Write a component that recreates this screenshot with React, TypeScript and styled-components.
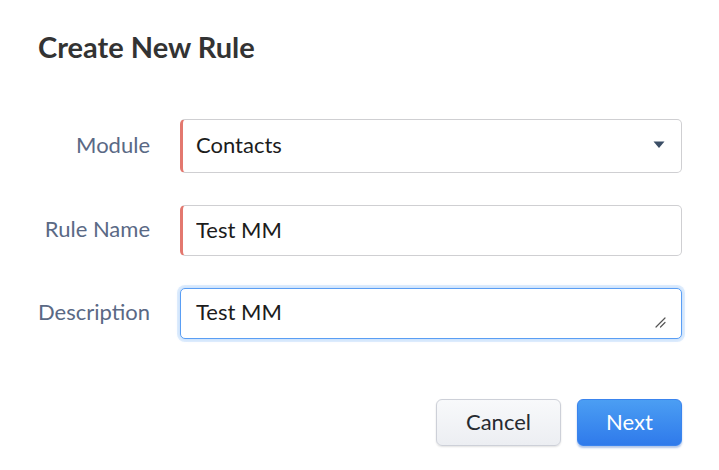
import React, { useState } from "react";
import styled, { createGlobalStyle } from "styled-components";

const GlobalStyle = createGlobalStyle`
  html, body {
    margin: 0;
    padding: 0;
    background: #ffffff;
  }
  body {
    font-family: Lato, "Liberation Sans", sans-serif;
  }
`;

const App: React.FC = () => {
  const [form, setForm] = useState({
    module: "Contacts",
    ruleName: "Test MM",
    description: "Test MM",
  });

  const handleChange = (
    e: React.ChangeEvent<HTMLInputElement | HTMLTextAreaElement | HTMLSelectElement>,
  ) => {
    setForm({ ...form, [e.target.name]: e.target.value });
  };

  return (
    <Page>
      <GlobalStyle />
      <Title>Create New Rule</Title>
      <Form>
        <Row>
          <Label htmlFor="module">Module</Label>
          <SelectWrap>
            <Select
              id="module"
              name="module"
              value={form.module}
              onChange={handleChange}
              $required
            >
              <option>Contacts</option>
              <option>Leads</option>
              <option>Deals</option>
            </Select>
            <Caret viewBox="0 0 12 8" aria-hidden>
              <path d="M0.5 0.5 H11.5 L6 7 Z" fill="#3b4e66" />
            </Caret>
          </SelectWrap>
        </Row>
        <Row>
          <Label htmlFor="ruleName">Rule Name</Label>
          <Input
            id="ruleName"
            name="ruleName"
            value={form.ruleName}
            onChange={handleChange}
            $required
          />
        </Row>
        <Row>
          <Label htmlFor="description">Description</Label>
          <AreaWrap>
            <TextArea
              id="description"
              name="description"
              value={form.description}
              onChange={handleChange}
              rows={1}
            />
            <Grip viewBox="0 0 12 12" aria-hidden>
              <path
                d="M2 11 L11 2 M6.5 11 L11 6.5"
                stroke="#555"
                strokeWidth="1.2"
                strokeLinecap="round"
              />
            </Grip>
          </AreaWrap>
        </Row>
      </Form>
      <Actions>
        <Button type="button">Cancel</Button>
        <Button type="button" $primary>
          Next
        </Button>
      </Actions>
    </Page>
  );
};

const Page = styled.div`
  width: 719px;
  height: 470px;
  box-sizing: border-box;
  padding: 30px 37px 0 38px;
`;

const Title = styled.h1`
  margin: 0;
  font-size: 29px;
  line-height: 34px;
  font-weight: 700;
  color: #333333;
`;

const Form = styled.div`
  display: flex;
  flex-direction: column;
  gap: 32px;
  margin-top: 55px;
`;

const Row = styled.div`
  display: grid;
  grid-template-columns: 112px 1fr;
  column-gap: 30px;
  align-items: center;
`;

const Label = styled.label`
  text-align: right;
  white-space: nowrap;
  font-size: 22px;
  line-height: 26px;
  margin-top: -3px;
  color: #5a6985;
`;

const fieldBase = `
  width: 100%;
  box-sizing: border-box;
  font-family: Lato, "Liberation Sans", sans-serif;
  font-size: 22px;
  color: #1c1c1c;
  background: #ffffff;
  border: 1px solid #cfcfd2;
  border-radius: 5px;
  outline: none;
`;

const SelectWrap = styled.div`
  position: relative;
`;

const Select = styled.select<{ $required?: boolean }>`
  ${fieldBase}
  height: 54px;
  padding: 0 40px 3px 13px;
  appearance: none;
  border-left: ${(p) => (p.$required ? "3px solid #e3786f" : "1px solid #cfcfd2")};
`;

const Caret = styled.svg`
  position: absolute;
  right: 17px;
  top: 22px;
  width: 12px;
  height: 8px;
  pointer-events: none;
`;

const Input = styled.input<{ $required?: boolean }>`
  ${fieldBase}
  height: 51px;
  padding: 0 13px 3px;
  border-left: ${(p) => (p.$required ? "3px solid #e3786f" : "1px solid #cfcfd2")};
`;

const AreaWrap = styled.div`
  position: relative;
  height: 51px;
`;

const TextArea = styled.textarea`
  ${fieldBase}
  display: block;
  height: 51px;
  padding: 9px 15px;
  line-height: 28px;
  resize: none;
  overflow: hidden;
  border-color: #5a9ef4;
  box-shadow: 0 0 0 3px rgba(90, 158, 244, 0.18), 0 0 4px rgba(90, 158, 244, 0.3);
`;

const Grip = styled.svg`
  position: absolute;
  right: 16px;
  bottom: 11px;
  width: 12px;
  height: 12px;
  pointer-events: none;
`;

const Actions = styled.div`
  display: flex;
  justify-content: flex-end;
  gap: 16px;
  margin-top: 60px;
`;

const Button = styled.button<{ $primary?: boolean }>`
  height: 47px;
  box-sizing: border-box;
  padding: 0 0 2px;
  width: ${(p) => (p.$primary ? "105px" : "125px")};
  font-family: Lato, "Liberation Sans", sans-serif;
  font-size: 22px;
  border-radius: 6px;
  cursor: pointer;
  color: ${(p) => (p.$primary ? "#ffffff" : "#262a30")};
  background: ${(p) =>
    p.$primary
      ? "linear-gradient(180deg, #4b9ef3 0%, #2f7aeb 100%)"
      : "linear-gradient(180deg, #f8f9fb 0%, #eceef2 100%)"};
  border: 1px solid ${(p) => (p.$primary ? "#3a84ee" : "#cdd0d8")};
  box-shadow: ${(p) =>
    p.$primary
      ? "0 2px 2px rgba(30, 90, 190, 0.35)"
      : "0 1px 2px rgba(0, 0, 0, 0.12)"};
`;

export default App;
